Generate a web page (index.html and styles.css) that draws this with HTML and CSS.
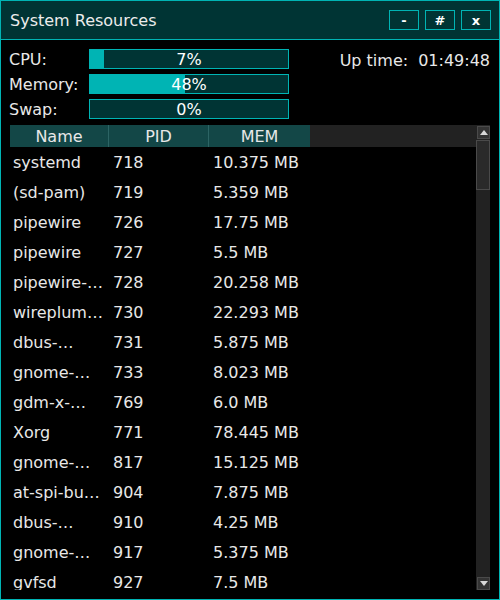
FILE: index.html
```html
<!DOCTYPE html>
<html>
<head>
<meta charset="utf-8">
<link rel="stylesheet" href="styles.css">
</head>
<body>
<div class="window">
  <div class="titlebar">
    <span class="title">System Resources</span>
    <div class="buttons">
      <span class="btn">-</span>
      <span class="btn">#</span>
      <span class="btn">x</span>
    </div>
  </div>
  <div class="content">
    <div class="stats">
      <div class="meters">
        <span class="label">CPU:</span>
        <div class="bar"><div class="fill" style="width:7%"></div><span class="pct">7%</span></div>
        <span class="label">Memory:</span>
        <div class="bar"><div class="fill" style="width:48%"></div><span class="pct">48%</span></div>
        <span class="label">Swap:</span>
        <div class="bar"><div class="fill" style="width:0%"></div><span class="pct">0%</span></div>
      </div>
      <div class="uptime"><span>Up time:</span><span>01:49:48</span></div>
    </div>
    <div class="tablewrap">
      <div class="table">
        <div class="thead">
          <span class="th c1">Name</span>
          <span class="th c2">PID</span>
          <span class="th c3">MEM</span>
        </div>
        <div class="tbody">
          <div class="row"><span>systemd</span><span>718</span><span>10.375 MB</span></div>
          <div class="row"><span>(sd-pam)</span><span>719</span><span>5.359 MB</span></div>
          <div class="row"><span>pipewire</span><span>726</span><span>17.75 MB</span></div>
          <div class="row"><span>pipewire</span><span>727</span><span>5.5 MB</span></div>
          <div class="row"><span>pipewire-…</span><span>728</span><span>20.258 MB</span></div>
          <div class="row"><span>wireplum…</span><span>730</span><span>22.293 MB</span></div>
          <div class="row"><span>dbus-…</span><span>731</span><span>5.875 MB</span></div>
          <div class="row"><span>gnome-…</span><span>733</span><span>8.023 MB</span></div>
          <div class="row"><span>gdm-x-…</span><span>769</span><span>6.0 MB</span></div>
          <div class="row"><span>Xorg</span><span>771</span><span>78.445 MB</span></div>
          <div class="row"><span>gnome-…</span><span>817</span><span>15.125 MB</span></div>
          <div class="row"><span>at-spi-bu…</span><span>904</span><span>7.875 MB</span></div>
          <div class="row"><span>dbus-…</span><span>910</span><span>4.25 MB</span></div>
          <div class="row"><span>gnome-…</span><span>917</span><span>5.375 MB</span></div>
          <div class="row"><span>gvfsd</span><span>927</span><span>7.5 MB</span></div>
        </div>
      </div>
      <div class="scrollbar">
        <div class="sbtn"><svg width="8" height="5" viewBox="0 0 8 5"><polygon points="0,5 8,5 4,0" fill="#d8d8d8"/></svg></div>
        <div class="thumb"></div>
        <div class="track"></div>
        <div class="sbtn"><svg width="8" height="5" viewBox="0 0 8 5"><polygon points="0,0 8,0 4,5" fill="#d8d8d8"/></svg></div>
      </div>
    </div>
  </div>
</div>
</body>
</html>
```

FILE: styles.css
```css
html, body {
  margin: 0;
  padding: 0;
  background: #000;
}
body {
  font-family: "DejaVu Sans", sans-serif;
  font-size: 16px;
  color: #e8e8e8;
}
.window {
  box-sizing: border-box;
  width: 500px;
  height: 600px;
  border: 1px solid #00b4b4;
  background: #000;
  display: flex;
  flex-direction: column;
  overflow: hidden;
}
.titlebar {
  height: 38px;
  flex: none;
  background: #003434;
  border-bottom: 1px solid #00b4b4;
  display: flex;
  align-items: center;
  justify-content: space-between;
  padding: 0 8px 0 9px;
}
.title {
  font-size: 16px;
  color: #ececec;
}
.buttons {
  display: flex;
  gap: 6px;
}
.btn {
  box-sizing: border-box;
  width: 30px;
  height: 20px;
  border: 1px solid #00b4b4;
  display: flex;
  align-items: center;
  justify-content: center;
  font-size: 13px;
  font-weight: bold;
  color: #fff;
  line-height: 1;
}
.content {
  flex: 1;
  min-height: 0;
  display: flex;
  flex-direction: column;
  padding: 9px 9px 9px 8px;
  gap: 6px;
}
.stats {
  display: flex;
  justify-content: space-between;
  align-items: flex-start;
}
.meters {
  display: grid;
  grid-template-columns: 80px 200px;
  grid-auto-rows: 20px;
  row-gap: 5px;
  align-items: center;
}
.label {
  line-height: 20px;
  padding-top: 2px;
}
.bar {
  box-sizing: border-box;
  position: relative;
  height: 20px;
  border: 1px solid #00b4b4;
  background: #003434;
  overflow: hidden;
}
.fill {
  position: absolute;
  left: 0;
  top: 0;
  bottom: 0;
  background: #00b4b4;
}
.pct {
  position: relative;
  display: block;
  text-align: center;
  line-height: 20px;
  color: #fff;
}
.uptime {
  display: flex;
  gap: 10px;
  line-height: 20px;
  padding-top: 2px;
}
.tablewrap {
  flex: 1;
  min-height: 0;
  display: flex;
  margin-left: 1px;
}
.table {
  flex: 1;
  min-width: 0;
  display: flex;
  flex-direction: column;
  overflow: hidden;
}
.thead {
  flex: none;
  height: 22px;
  background: #222;
  display: flex;
}
.th {
  box-sizing: border-box;
  height: 22px;
  padding-top: 2px;
  line-height: 20px;
  text-align: center;
  background: #134747;
  border-right: 1px solid #2c6464;
  color: #e8e8e8;
}
.c1 { width: 99px; }
.c2 { width: 100px; }
.c3 { width: 101px; border-right: none; }
.tbody {
  flex: 1;
  min-height: 0;
  overflow: hidden;
}
.row {
  display: grid;
  grid-template-columns: 100px 100px 1fr;
  height: 30px;
}
.row span {
  box-sizing: border-box;
  height: 30px;
  padding: 2px 0 0 3px;
  line-height: 28px;
  white-space: nowrap;
  overflow: hidden;
}
.scrollbar {
  flex: none;
  width: 14px;
  background: #222;
  display: flex;
  flex-direction: column;
  padding-top: 1px;
  box-sizing: border-box;
}
.sbtn {
  box-sizing: border-box;
  height: 13px;
  width: 13px;
  margin-left: 1px;
  border: 1px solid #4a4a4a;
  background: #333;
  display: flex;
  align-items: center;
  justify-content: center;
  flex: none;
}
.thumb {
  box-sizing: border-box;
  height: 50px;
  margin-top: 1px;
  border: 1px solid #4a4a4a;
  background: #2a2a2a;
  flex: none;
}
.track {
  flex: 1;
}
```
